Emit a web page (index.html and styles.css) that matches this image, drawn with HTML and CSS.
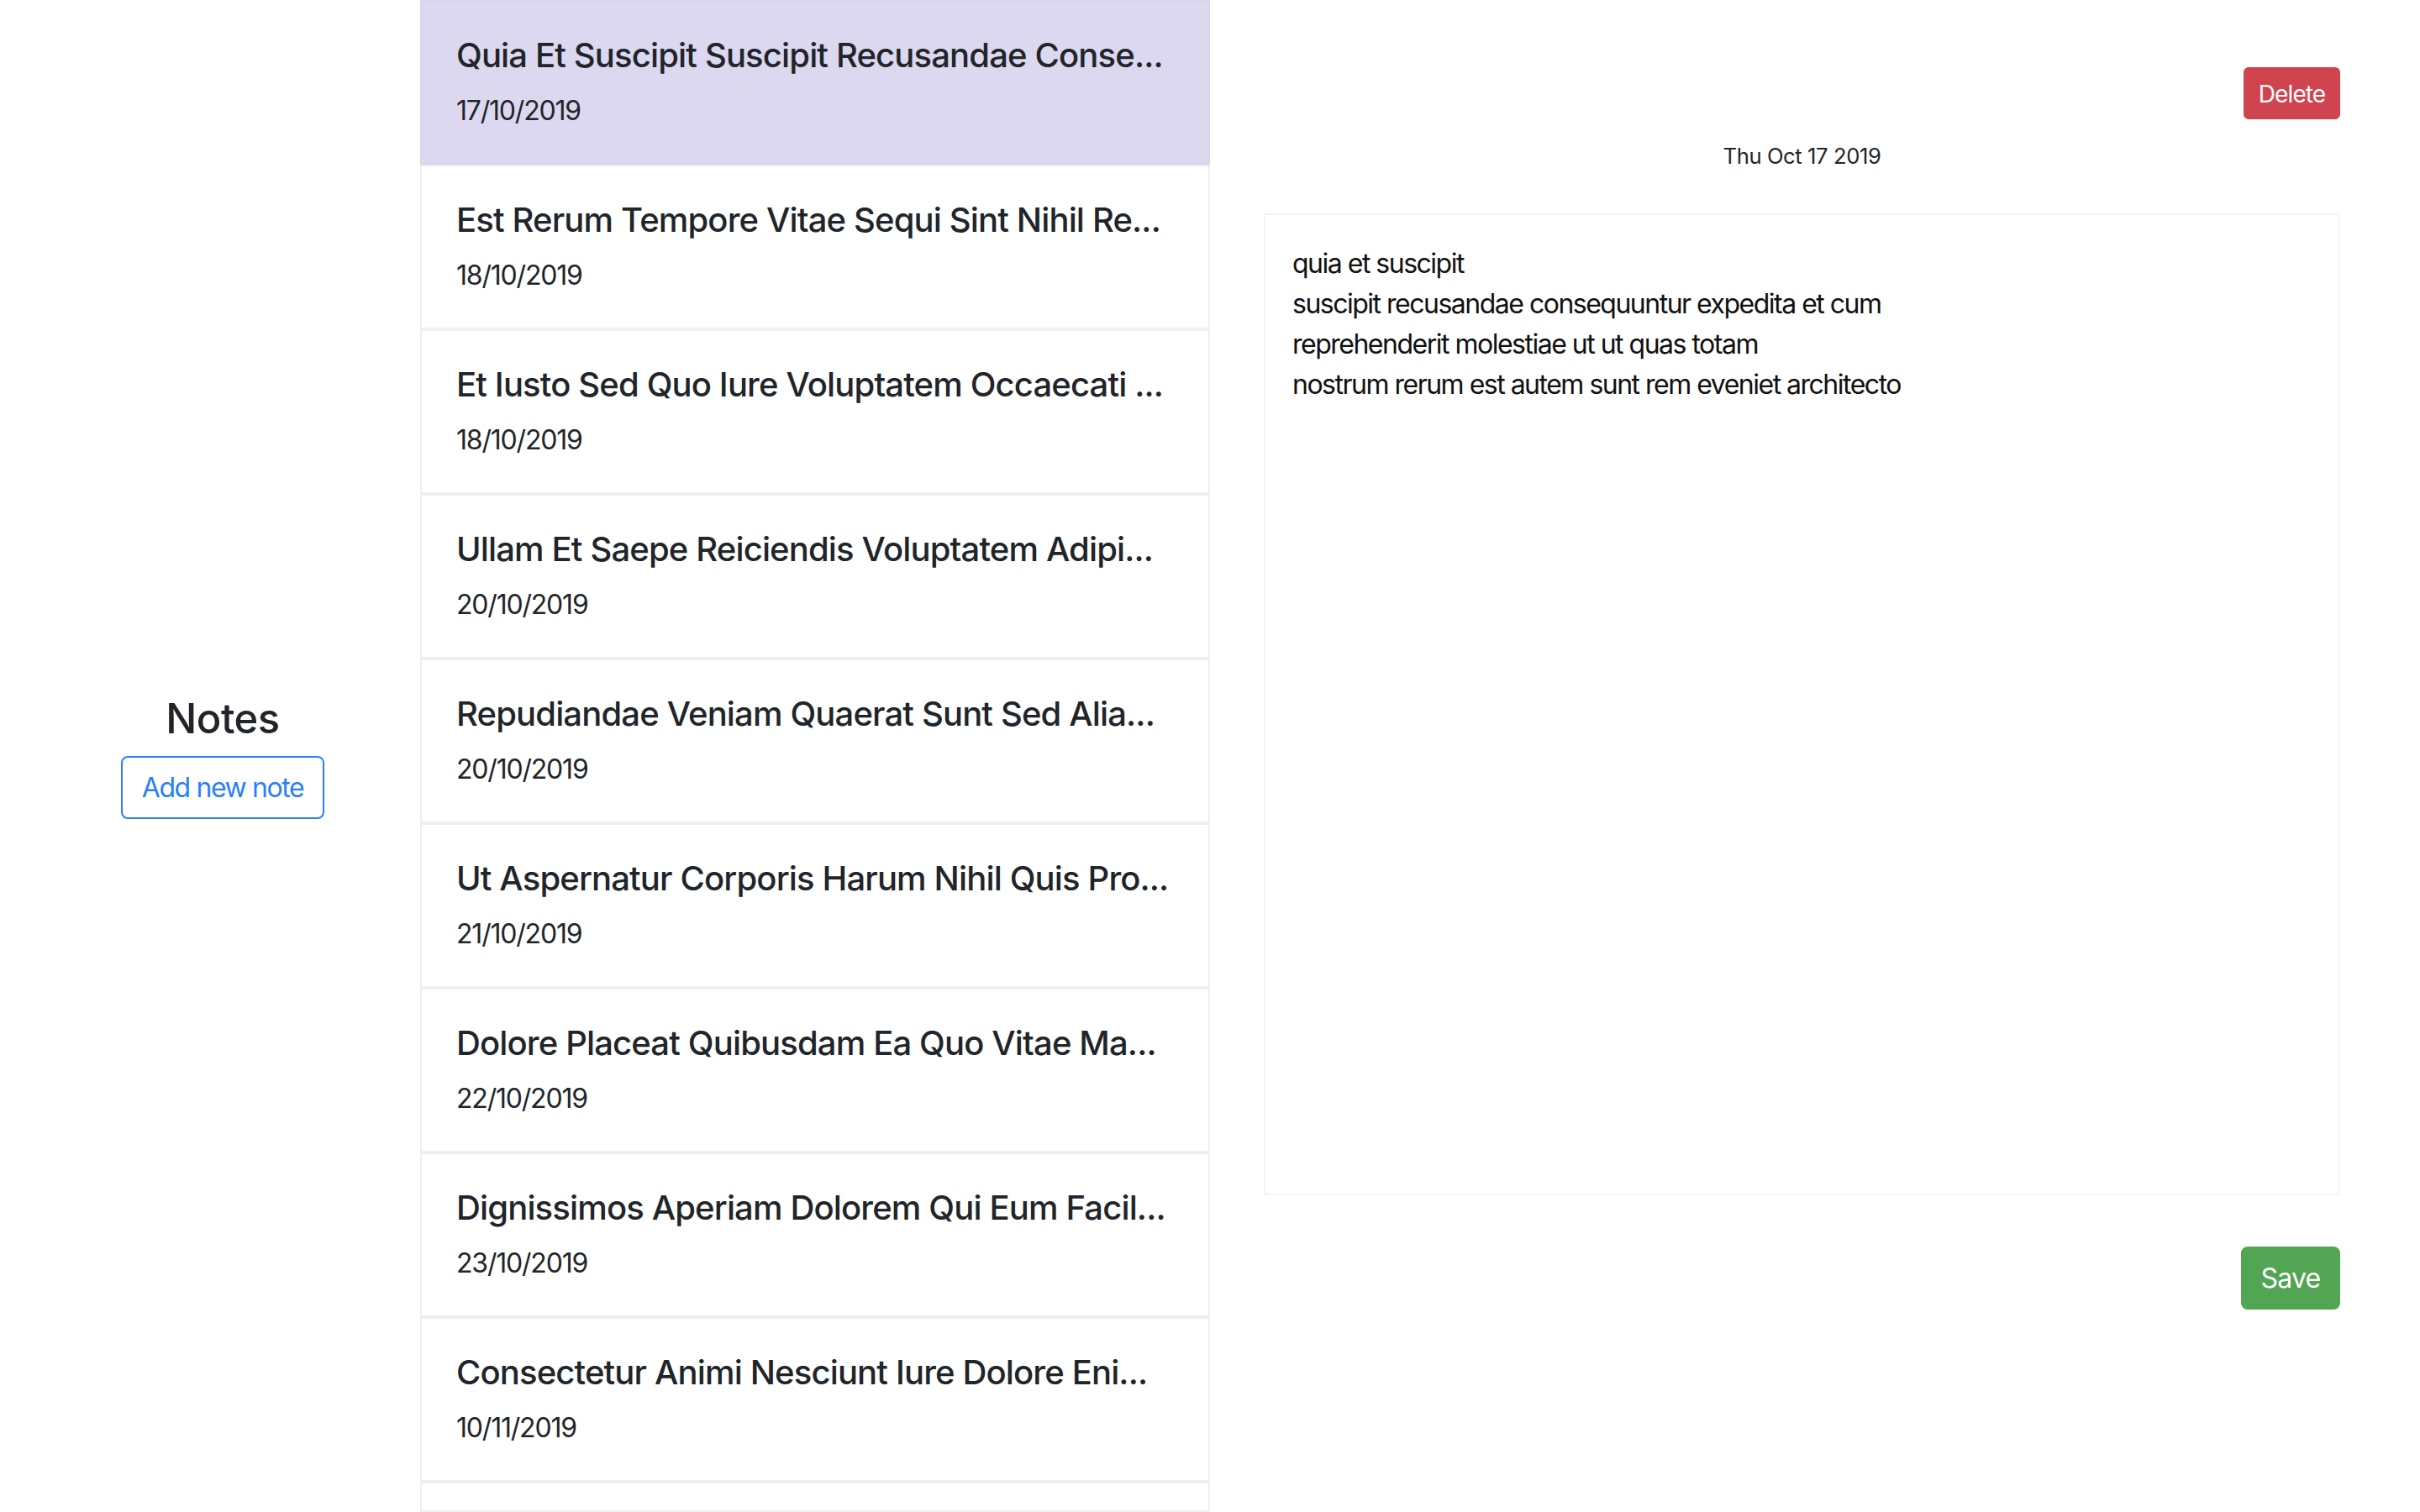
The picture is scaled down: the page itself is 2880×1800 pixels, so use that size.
FILE: index.html
```html
<!DOCTYPE html>
<html lang="en">
<head>
<meta charset="utf-8">
<title>Notes</title>
<link rel="stylesheet" href="styles.css">
</head>
<body>
<div class="app">
  <aside class="sidebar">
    <h1 class="sidebar-title">Notes</h1>
    <button class="btn btn-outline-primary">Add new note</button>
  </aside>
  <ul class="note-list">
    <li class="note-item active">
      <h2 class="note-title">Quia Et Suscipit Suscipit Recusandae Conse...</h2>
      <p class="note-date">17/10/2019</p>
    </li>
    <li class="note-item">
      <h2 class="note-title">Est Rerum Tempore Vitae Sequi Sint Nihil Re...</h2>
      <p class="note-date">18/10/2019</p>
    </li>
    <li class="note-item">
      <h2 class="note-title">Et Iusto Sed Quo Iure Voluptatem Occaecati ...</h2>
      <p class="note-date">18/10/2019</p>
    </li>
    <li class="note-item">
      <h2 class="note-title">Ullam Et Saepe Reiciendis Voluptatem Adipi...</h2>
      <p class="note-date">20/10/2019</p>
    </li>
    <li class="note-item">
      <h2 class="note-title">Repudiandae Veniam Quaerat Sunt Sed Alia...</h2>
      <p class="note-date">20/10/2019</p>
    </li>
    <li class="note-item">
      <h2 class="note-title">Ut Aspernatur Corporis Harum Nihil Quis Pro...</h2>
      <p class="note-date">21/10/2019</p>
    </li>
    <li class="note-item">
      <h2 class="note-title">Dolore Placeat Quibusdam Ea Quo Vitae Ma...</h2>
      <p class="note-date">22/10/2019</p>
    </li>
    <li class="note-item">
      <h2 class="note-title">Dignissimos Aperiam Dolorem Qui Eum Facil...</h2>
      <p class="note-date">23/10/2019</p>
    </li>
    <li class="note-item">
      <h2 class="note-title">Consectetur Animi Nesciunt Iure Dolore Eni...</h2>
      <p class="note-date">10/11/2019</p>
    </li>
    <li class="note-item note-item-more" aria-hidden="true"></li>
  </ul>
  <main class="editor">
    <div class="editor-toolbar">
      <button class="btn btn-sm btn-danger">Delete</button>
    </div>
    <small class="editor-date">Thu Oct 17 2019</small>
    <textarea class="editor-body">quia et suscipit
suscipit recusandae consequuntur expedita et cum
reprehenderit molestiae ut ut quas totam
nostrum rerum est autem sunt rem eveniet architecto</textarea>
    <div class="editor-actions">
      <button class="btn btn-success">Save</button>
    </div>
  </main>
</div>
</body>
</html>
```
FILE: styles.css
```css
* {
  box-sizing: border-box;
}

html, body {
  margin: 0;
  padding: 0;
  height: 1800px;
  overflow: hidden;
  background: #fff;
}

body {
  font-family: Inter, "Noto Sans", "Liberation Sans", sans-serif;
  color: #212529;
}

.app {
  display: flex;
  height: 1800px;
}

.sidebar {
  width: 470px;
  margin-left: 30px;
  flex-shrink: 0;
  display: flex;
  flex-direction: column;
  align-items: center;
  justify-content: center;
  padding-top: 2px;
}

.sidebar-title {
  margin: 0 0 14px;
  font-size: 49px;
  line-height: 1.2;
  font-weight: 500;
  color: #212529;
  letter-spacing: -0.5px;
}

.btn {
  font-family: Inter, "Noto Sans", "Liberation Sans", sans-serif;
  display: inline-block;
  border: 2px solid transparent;
  background: transparent;
  font-size: 32px;
  line-height: 47px;
  padding: 12px 24px;
  border-radius: 8px;
  font-weight: 400;
  cursor: pointer;
  letter-spacing: -0.8px;
}

.btn-outline-primary {
  color: #2a7ff6;
  border-color: #2a7ff6;
  width: 242px;
  padding: 12px 0;
  text-align: center;
  letter-spacing: -1.4px;
}

.btn-sm {
  font-size: 28px;
  line-height: 42px;
  padding: 9px 16px 7px;
  border-radius: 6px;
}

.btn-danger {
  background: #cf444f;
  border-color: #cf444f;
  color: #fff;
  width: 115px;
  padding-left: 0;
  padding-right: 0;
  text-align: center;
  letter-spacing: -0.9px;
}

.btn-success {
  background: #52a552;
  border-color: #52a552;
  color: #fff;
  width: 118px;
  padding-left: 0;
  padding-right: 0;
  text-align: center;
}

.note-list {
  list-style: none;
  margin: 0;
  padding: 0;
  width: 940px;
  flex-shrink: 0;
  display: flex;
  flex-direction: column;
  height: 1800px;
  overflow: hidden;
}

.note-item {
  flex-shrink: 0;
  border: 2px solid #efefef;
  padding: 40px 40px 40px 41px;
  background: #fff;
}

.note-item.active {
  background: #dbd8f0;
  border-color: #d9d6ec;
  border-bottom-color: #d6d3ea;
}

.note-item-more {
  flex: 1;
  padding: 0;
}

.note-title {
  margin: 0 0 18px;
  font-size: 40px;
  line-height: 48px;
  font-weight: 500;
  color: #212529;
  white-space: nowrap;
  overflow: hidden;
  text-overflow: ellipsis;
  letter-spacing: -0.85px;
}

.note-date {
  margin: 0 0 -2px;
  font-size: 32px;
  line-height: 48px;
  color: #212529;
  letter-spacing: -1.2px;
}

.editor {
  flex: 1;
  min-width: 0;
  padding: 80px 95px 0 64px;
  display: flex;
  flex-direction: column;
}

.editor-toolbar {
  display: flex;
  justify-content: flex-end;
  margin-bottom: 25px;
}

.editor-date {
  display: block;
  text-align: center;
  font-size: 25.6px;
  line-height: 38px;
  color: #212529;
  margin-bottom: 49px;
  letter-spacing: -0.4px;
}

.editor-body {
  display: block;
  width: 100%;
  height: 1169px;
  border: 2px solid #f4f4f4;
  border-radius: 0;
  padding: 34px 32px 30px;
  margin: 0;
  resize: none;
  outline: none;
  font-family: Inter, "Noto Sans", "Liberation Sans", sans-serif;
  font-size: 32px;
  line-height: 48px;
  color: #111;
  background: #fff;
  letter-spacing: -1.5px;
}

.editor-actions {
  display: flex;
  justify-content: flex-end;
  margin-top: 61px;
}
```
